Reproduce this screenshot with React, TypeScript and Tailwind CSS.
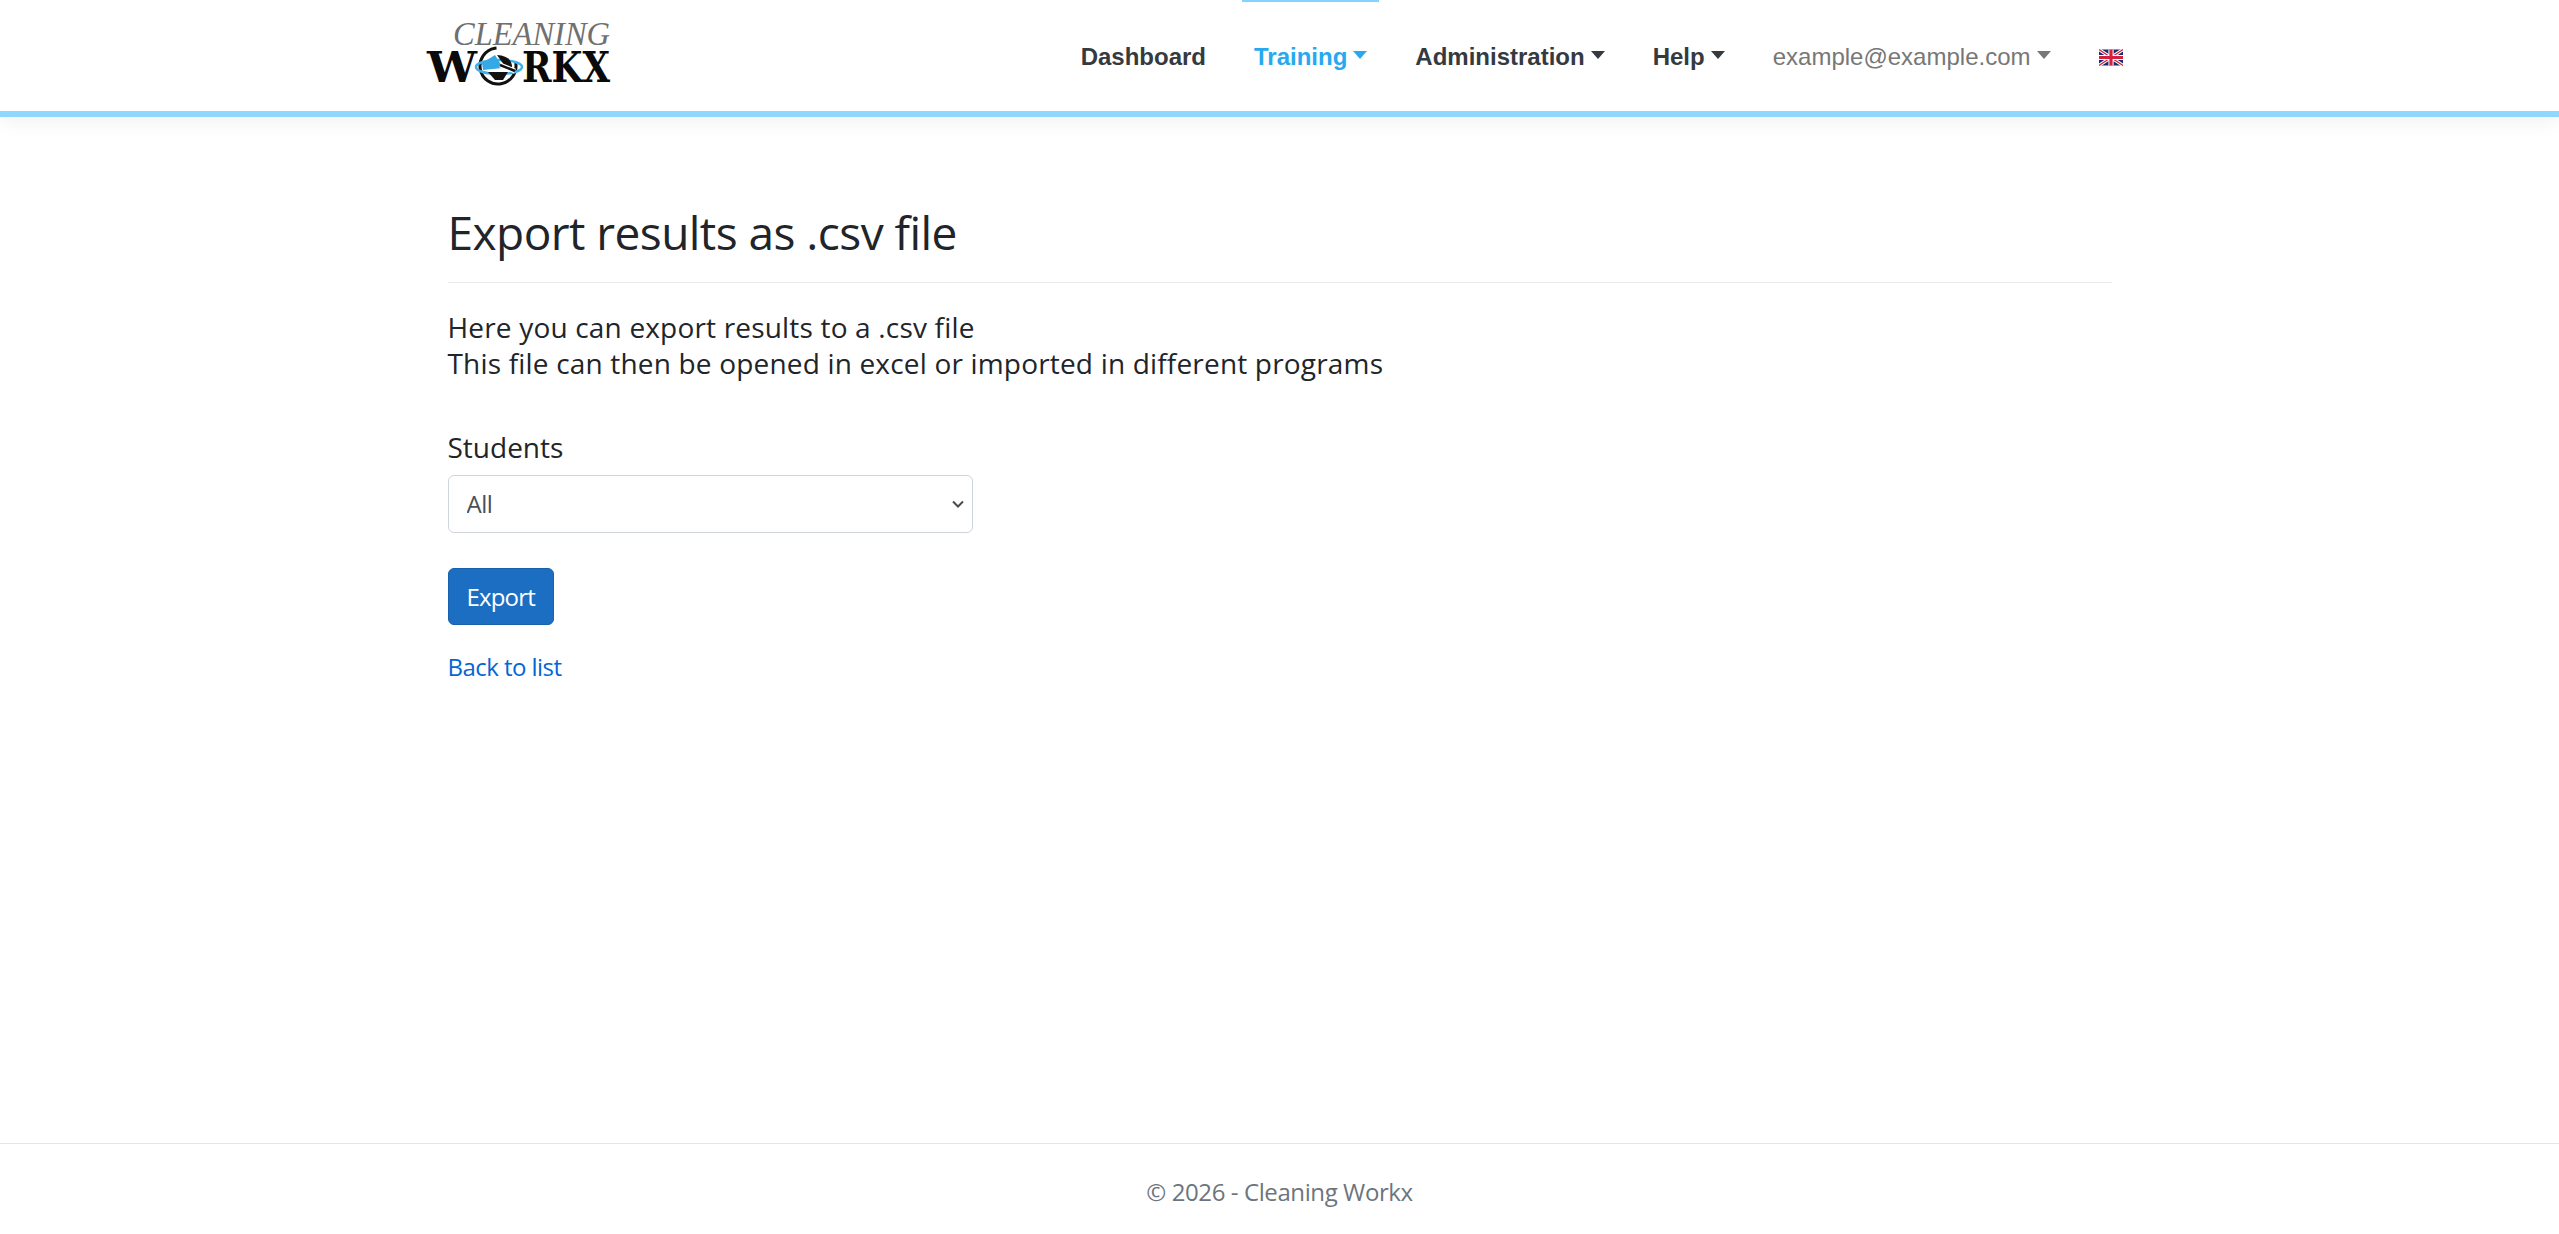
const NavCaret = () => (
  <span className="ml-[6px] inline-block align-[6px] border-x-[7px] border-t-[8px] border-x-transparent border-t-current" />
);

const NavItem = ({ label, caret, active, muted }: { label: string; caret?: boolean; active?: boolean; muted?: boolean }) => (
  <a
    className={`mx-3 flex h-[111px] items-center whitespace-nowrap border-t-2 px-3 pt-[1px] text-[24px] ${
      active ? "border-[#80d4ff] font-bold text-[#27a9ef]" : muted ? "border-transparent text-[#777777]" : "border-transparent font-bold text-[#343a40]"
    }`}
  >
    <span>
      {label}
      {caret && <NavCaret />}
    </span>
  </a>
);

const Logo = () => (
  <svg width="186" height="68" viewBox="0 0 186 68" className="block overflow-visible">
    <text x="26" y="25" textLength="157" lengthAdjust="spacingAndGlyphs" fontFamily="'Liberation Serif', serif" fontStyle="italic" fontSize="33" fill="#707070">
      CLEANING
    </text>
    <text x="0" y="62" textLength="50" lengthAdjust="spacingAndGlyphs" fontFamily="'DejaVu Serif', serif" fontWeight="700" fontSize="43" fill="#0a0a0a">
      W
    </text>
    <text x="95" y="62" textLength="88" lengthAdjust="spacingAndGlyphs" fontFamily="'DejaVu Serif', serif" fontWeight="700" fontSize="43" fill="#0a0a0a">
      RKX
    </text>
    <circle cx="71" cy="46" r="18" fill="none" stroke="#111111" strokeWidth="3" strokeDasharray="86 27" transform="rotate(-10 71 46)" />
    <ellipse cx="72" cy="47" rx="23" ry="7" fill="none" stroke="#3fb1ea" strokeWidth="2.5" />
    <path d="M55 43 L68 35 L76 48 L56 50 Z" fill="#35a8e6" />
    <path d="M70 35 Q84 36 85 46 L85 50 L77 45 Z" fill="#111111" />
    <path d="M61 52 H81 L76 60 H68 Z" fill="#111111" />
    <path d="M73 45 L88 51" stroke="#ffffff" strokeWidth="5" />
    <path d="M73 45 L88 51" stroke="#111111" strokeWidth="2.5" />
  </svg>
);

const UkFlag = () => (
  <svg width="24" height="17" viewBox="0 0 60 40" className="block">
    <rect width="60" height="40" fill="#1c2a6e" />
    <path d="M0 0 L60 40 M60 0 L0 40" stroke="#ffffff" strokeWidth="8" />
    <path d="M0 0 L60 40 M60 0 L0 40" stroke="#d3203c" strokeWidth="3" />
    <path d="M30 0 V40 M0 20 H60" stroke="#ffffff" strokeWidth="13" />
    <path d="M30 0 V40 M0 20 H60" stroke="#d3203c" strokeWidth="8" />
  </svg>
);

export default function App() {
  return (
    <div className="flex min-h-[1234px] flex-col bg-white font-['Open_Sans',sans-serif] text-[24px] leading-[36px] text-[#212529]">
      <header className="h-[117px] border-b-[6px] border-[#8ed8ff] bg-white shadow-[0_6px_18px_rgba(0,0,0,0.05)]">
        <div className="mx-auto flex w-[1706px] items-start justify-between">
          <div className="pt-[20px]">
            <Logo />
          </div>
          <nav className="-mr-[14px] flex items-center font-['Liberation_Sans',sans-serif]">
            <NavItem label="Dashboard" />
            <NavItem label="Training" caret active />
            <NavItem label="Administration" caret />
            <NavItem label="Help" caret />
            <NavItem label="example@example.com" caret muted />
            <a className="mx-3 flex h-[111px] items-center px-3 pt-[3px]">
              <UkFlag />
            </a>
          </nav>
        </div>
      </header>

      <main className="mx-auto w-[1664px] flex-1">
        <h1 className="mt-[86px] border-b border-[#e9ecef] pb-[21px] text-[46px] leading-[58px] tracking-[-0.55px] text-[#212529]">
          Export results as .csv file
        </h1>
        <p className="mt-[26px] text-[28px] tracking-[0.18px]">
          Here you can export results to a .csv file
          <br />
          This file can then be opened in excel or imported in different programs
        </p>
        <div className="mt-[48px] w-[525px]">
          <label className="block text-[28px]">Students</label>
          <div className="relative mt-[10px]">
            <select className="block h-[58px] w-full appearance-none rounded-[6px] border border-[#ced4da] bg-white px-[18px] text-[24px] tracking-[-0.5px] text-[#495057]">
              <option>All</option>
            </select>
            <svg width="12" height="8" viewBox="0 0 12 8" className="pointer-events-none absolute right-[9px] top-[25px]">
              <path d="M1 1.5 L6 6.5 L11 1.5" fill="none" stroke="#4a4a4a" strokeWidth="2" />
            </svg>
          </div>
        </div>
        <button className="mt-[35px] block h-[57px] rounded-[6px] border border-[#1861ac] bg-[#1b6ec2] px-[18px] text-[24px] tracking-[-0.84px] text-white">
          Export
        </button>
        <a className="mt-[24px] block tracking-[-0.55px] text-[#0366d6]">Back to list</a>
      </main>

      <footer className="h-[91px] border-t border-[#e5e5e5] pt-[30px] text-center tracking-[-0.4px] text-[#6c757d]">
        © 2026 - Cleaning Workx
      </footer>
    </div>
  );
}
